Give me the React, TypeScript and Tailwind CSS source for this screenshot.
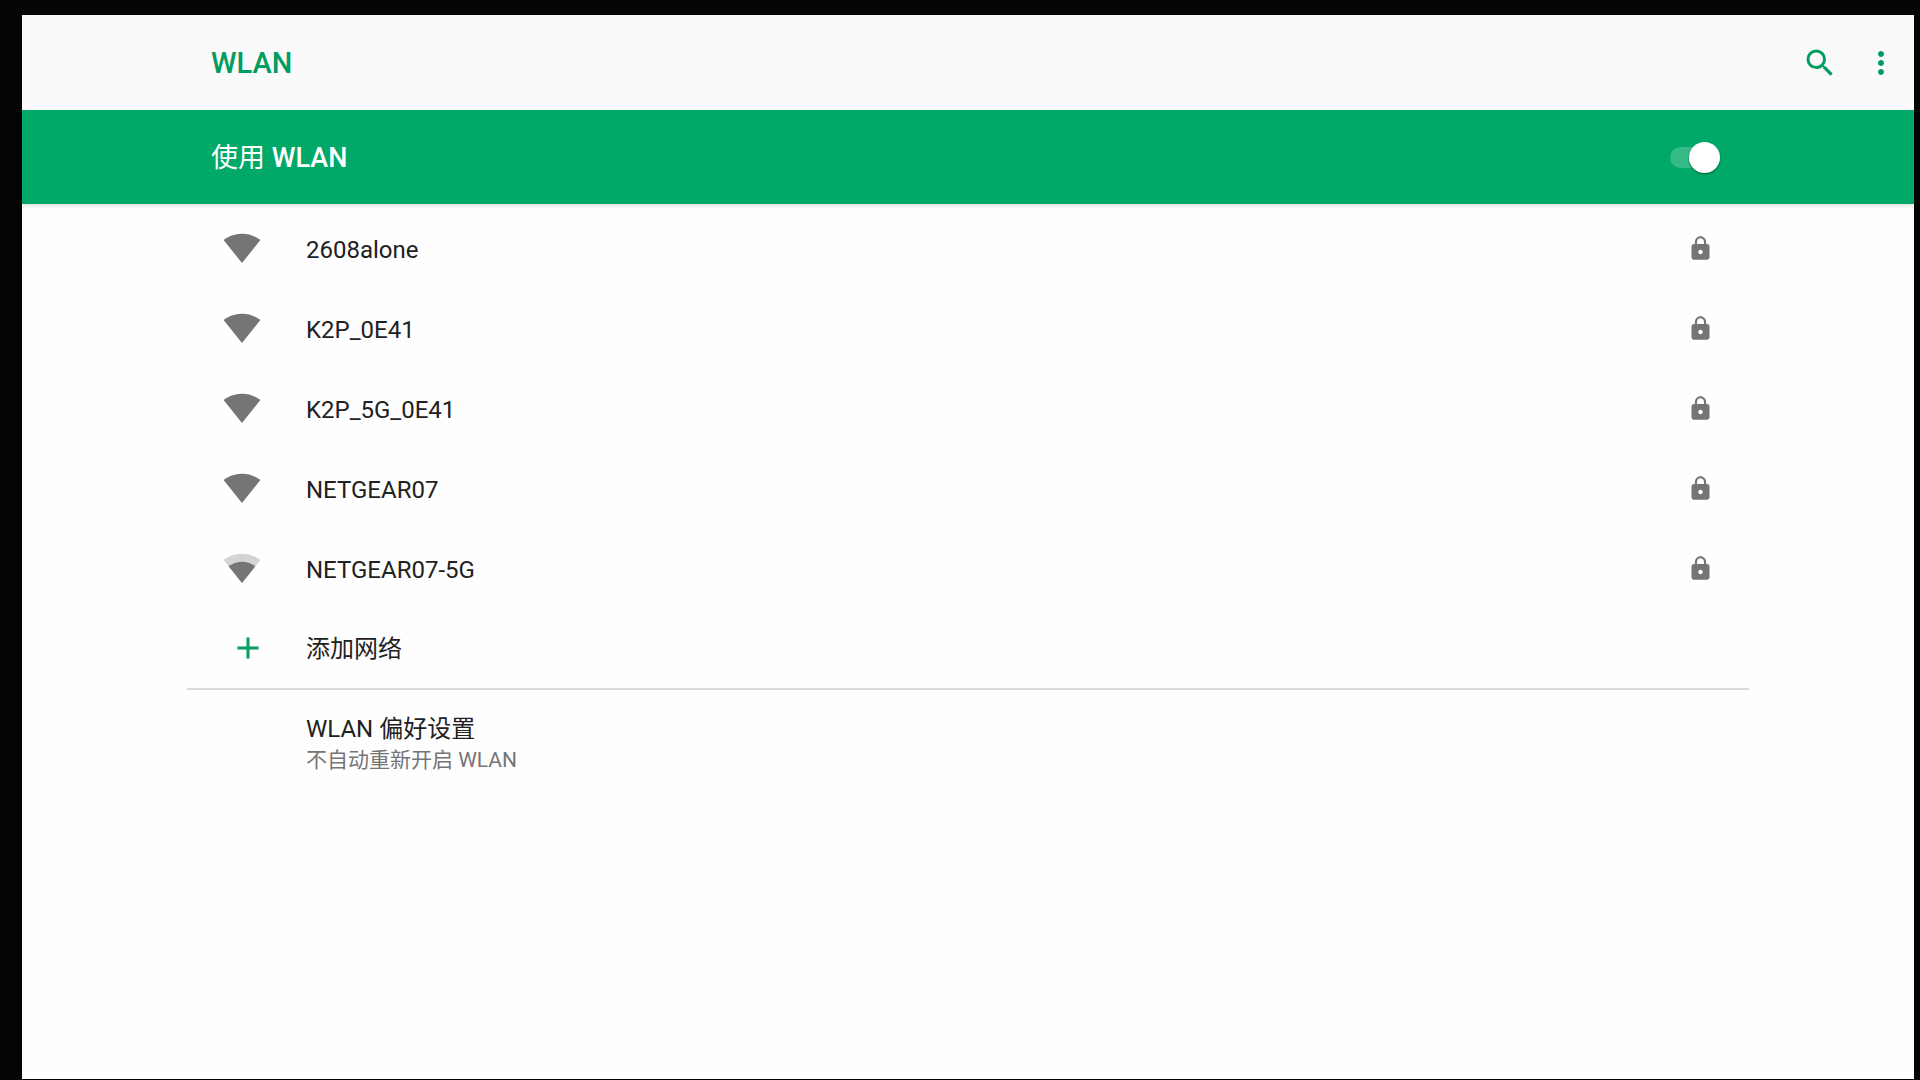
import { useState } from "react";
import { MdAdd, MdLock, MdMoreVert, MdSearch } from "react-icons/md";

const networks = [
  { ssid: "2608alone", level: 4 },
  { ssid: "K2P_0E41", level: 4 },
  { ssid: "K2P_5G_0E41", level: 4 },
  { ssid: "NETGEAR07", level: 4 },
  { ssid: "NETGEAR07-5G", level: 3 },
];

function WifiSignal({ level }: { level: number }) {
  const full = "M12.01 21.49L23.64 7c-.45-.34-4.93-4-11.64-4C5.28 3 .81 6.66.36 7l11.63 14.49.01.01.01-.01z";
  return (
    <svg className="size-[38px] text-[#757575]" viewBox="0 0 24 24" fill="currentColor" aria-hidden="true">
      <path d={full} fillOpacity={level === 4 ? 1 : 0.3} />
      {level < 4 && (
        <path d="M3.53 10.95l8.46 10.54.01.01.01-.01 8.46-10.54C20.04 10.62 16.81 8 12 8c-4.81 0-8.04 2.62-8.47 2.95z" />
      )}
    </svg>
  );
}

export default function App() {
  const [enabled, setEnabled] = useState(true);

  return (
    <div className="min-h-screen flex flex-col bg-[#050505] pt-[15px] pr-[6px] pb-px pl-[22px] font-['Roboto','Noto_Sans_CJK_SC',sans-serif] text-[#212121]">
      <div className="grow flex flex-col bg-[#fefefe]">
        {/* App bar */}
        <header className="h-[95px] flex items-center bg-[#fafafa] pl-[189px] pr-[15px] text-[#009c60]">
          <h1 className="grow text-[29px] leading-[36px] font-medium">WLAN</h1>
          <div className="flex gap-[25px]">
            <button type="button" aria-label="搜索">
              <MdSearch className="size-[36px]" />
            </button>
            <button type="button" aria-label="更多选项">
              <MdMoreVert className="size-[36px]" />
            </button>
          </div>
        </header>

        {/* Master switch */}
        <div className="h-[94px] flex items-center justify-between bg-[#00a968] pl-[189px] pr-[194px] text-white shadow-[0_2px_4px_rgba(0,0,0,0.12)]">
          <label htmlFor="wlan-switch" className="pt-[2px] text-[27px] leading-[36px]">
            使用 <span className="font-medium">WLAN</span>
          </label>
          <input
            id="wlan-switch"
            type="checkbox"
            role="switch"
            checked={enabled}
            onChange={(e) => setEnabled(e.target.checked)}
            className="appearance-none flex items-center w-[50px] h-[21px] rounded-full bg-white/20 cursor-pointer before:size-[31px] before:shrink-0 before:rounded-full before:bg-white before:shadow-[0_1px_2px_rgba(0,0,0,0.45)] checked:before:ml-[19px]"
          />
        </div>

        <main className="mx-[165px] pt-[4px]">
          <ul>
            {networks.map((network) => (
              <li key={network.ssid}>
                <button type="button" className="w-full h-[80px] flex items-center pl-[36px] pr-[35px] text-left">
                  <span className="w-[83px] shrink-0">
                    <WifiSignal level={network.level} />
                  </span>
                  <span className="grow pt-[4px] text-[24px] leading-[32px]">{network.ssid}</span>
                  <MdLock className="size-[27px] text-[#757575]" />
                </button>
              </li>
            ))}
          </ul>

          <button
            type="button"
            className="w-full h-[82px] flex items-center border-b-2 border-[#dadada] pl-[43px] text-left"
          >
            <span className="w-[76px] shrink-0 text-[#009c60]">
              <MdAdd className="size-[36px]" />
            </span>
            <span className="pt-[2px] text-[24px] leading-[32px]">添加网络</span>
          </button>

          <button type="button" className="w-full pt-[23px] pb-[20px] pl-[119px] text-left">
            <span className="block text-[24px] leading-[32px]">WLAN 偏好设置</span>
            <span className="block text-[21px] leading-[30px] text-[#757575]">不自动重新开启 WLAN</span>
          </button>
        </main>
      </div>
    </div>
  );
}
